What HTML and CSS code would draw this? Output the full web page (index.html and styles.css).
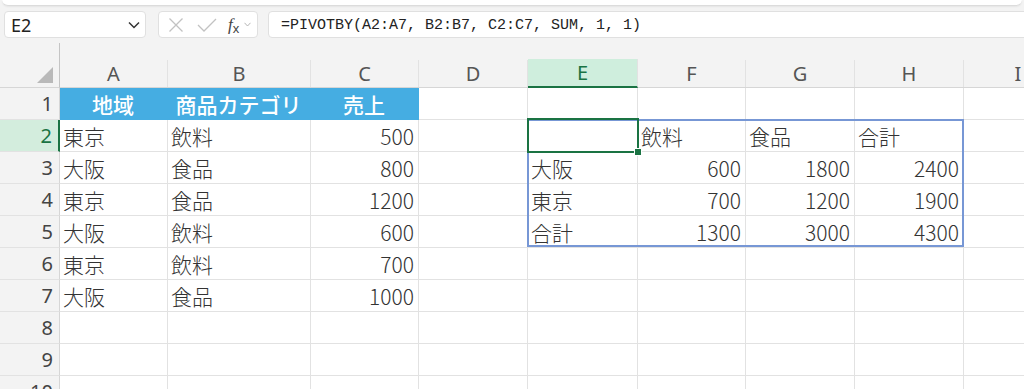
FILE: index.html
```html
<!DOCTYPE html>
<html lang="ja">
<head>
    <meta charset="UTF-8">
    <meta name="viewport" content="width=device-width, initial-scale=1.0">
    <title>PIVOTBY</title>
    <link rel="stylesheet" href="styles.css">
</head>
<body>
    <!-- リボン下端 -->
    <div class="ribbon-edge"></div>

    <!-- 数式バー -->
    <div class="formula-bar">
        <div class="name-box">
            <span>E2</span>
            <svg class="chev" width="12" height="8" viewBox="0 0 12 8"><polyline points="1,1.5 6,6.5 11,1.5" /></svg>
        </div>
        <div class="fx-box">
            <svg class="tool" width="16" height="16" viewBox="0 0 16 16"><path d="M1.5 1.5 L14.5 14.5 M14.5 1.5 L1.5 14.5" /></svg>
            <svg class="tool" width="20" height="14" viewBox="0 0 20 14"><polyline points="1,7 7,13 19,1" /></svg>
            <span class="fx"><i>f</i><b>x</b></span>
            <svg class="chev small" width="7" height="5" viewBox="0 0 7 5"><polyline points="0.5,0.8 3.5,4 6.5,0.8" /></svg>
        </div>
        <div class="formula-input">=PIVOTBY(A2:A7, B2:B7, C2:C7, SUM, 1, 1)</div>
    </div>

    <!-- シート -->
    <div class="sheet">
        <div class="row col-head">
            <div class="corner"><i class="select-all"></i></div>
            <div class="ch a"><span>A</span></div>
            <div class="ch b"><span>B</span></div>
            <div class="ch c"><span>C</span></div>
            <div class="ch d"><span>D</span></div>
            <div class="ch e active"><span>E</span></div>
            <div class="ch f"><span>F</span></div>
            <div class="ch g"><span>G</span></div>
            <div class="ch h"><span>H</span></div>
            <div class="ch i"><span>I</span></div>
        </div>

        <div class="row">
            <div class="rh">1</div>
            <div class="cell a head">地域</div>
            <div class="cell b head">商品カテゴリ</div>
            <div class="cell c head">売上</div>
            <div class="cell d"></div>
            <div class="cell e"></div>
            <div class="cell f"></div>
            <div class="cell g"></div>
            <div class="cell h"></div>
            <div class="cell i"></div>
        </div>

        <div class="row">
            <div class="rh active">2</div>
            <div class="cell a">東京</div>
            <div class="cell b">飲料</div>
            <div class="cell c num">500</div>
            <div class="cell d"></div>
            <div class="cell e current">
                <div class="pivot-frame"></div>
                <div class="selection"></div>
            </div>
            <div class="cell f">飲料</div>
            <div class="cell g">食品</div>
            <div class="cell h">合計</div>
            <div class="cell i"></div>
        </div>

        <div class="row">
            <div class="rh">3</div>
            <div class="cell a">大阪</div>
            <div class="cell b">食品</div>
            <div class="cell c num">800</div>
            <div class="cell d"></div>
            <div class="cell e">大阪</div>
            <div class="cell f num">600</div>
            <div class="cell g num">1800</div>
            <div class="cell h num">2400</div>
            <div class="cell i"></div>
        </div>

        <div class="row">
            <div class="rh">4</div>
            <div class="cell a">東京</div>
            <div class="cell b">食品</div>
            <div class="cell c num">1200</div>
            <div class="cell d"></div>
            <div class="cell e">東京</div>
            <div class="cell f num">700</div>
            <div class="cell g num">1200</div>
            <div class="cell h num">1900</div>
            <div class="cell i"></div>
        </div>

        <div class="row">
            <div class="rh">5</div>
            <div class="cell a">大阪</div>
            <div class="cell b">飲料</div>
            <div class="cell c num">600</div>
            <div class="cell d"></div>
            <div class="cell e">合計</div>
            <div class="cell f num">1300</div>
            <div class="cell g num">3000</div>
            <div class="cell h num">4300</div>
            <div class="cell i"></div>
        </div>

        <div class="row">
            <div class="rh">6</div>
            <div class="cell a">東京</div>
            <div class="cell b">飲料</div>
            <div class="cell c num">700</div>
            <div class="cell d"></div>
            <div class="cell e"></div>
            <div class="cell f"></div>
            <div class="cell g"></div>
            <div class="cell h"></div>
            <div class="cell i"></div>
        </div>

        <div class="row">
            <div class="rh">7</div>
            <div class="cell a">大阪</div>
            <div class="cell b">食品</div>
            <div class="cell c num">1000</div>
            <div class="cell d"></div>
            <div class="cell e"></div>
            <div class="cell f"></div>
            <div class="cell g"></div>
            <div class="cell h"></div>
            <div class="cell i"></div>
        </div>

        <div class="row">
            <div class="rh">8</div>
            <div class="cell a"></div>
            <div class="cell b"></div>
            <div class="cell c"></div>
            <div class="cell d"></div>
            <div class="cell e"></div>
            <div class="cell f"></div>
            <div class="cell g"></div>
            <div class="cell h"></div>
            <div class="cell i"></div>
        </div>

        <div class="row">
            <div class="rh">9</div>
            <div class="cell a"></div>
            <div class="cell b"></div>
            <div class="cell c"></div>
            <div class="cell d"></div>
            <div class="cell e"></div>
            <div class="cell f"></div>
            <div class="cell g"></div>
            <div class="cell h"></div>
            <div class="cell i"></div>
        </div>

        <div class="row">
            <div class="rh">10</div>
            <div class="cell a"></div>
            <div class="cell b"></div>
            <div class="cell c"></div>
            <div class="cell d"></div>
            <div class="cell e"></div>
            <div class="cell f"></div>
            <div class="cell g"></div>
            <div class="cell h"></div>
            <div class="cell i"></div>
        </div>
    </div>
</body>
</html>
```

FILE: styles.css
```css
html, body { height: 100%; }
body {
    margin: 0;
    overflow: hidden;
    background: #f3f3f3;
    font-family: "Noto Sans", "Noto Sans CJK JP", sans-serif;
}

/* リボン下端 */
.ribbon-edge {
    height: 5px;
    margin: 0 2px;
    background: #fff;
    border-bottom: 1px solid #dcdcdc;
    border-radius: 0 0 6px 6px;
    box-shadow: 0 1px 2px rgba(0, 0, 0, 0.06);
}

/* 数式バー */
.formula-bar {
    display: flex;
    height: 37px;
    box-sizing: border-box;
    padding: 5px 0 0 4px;
    gap: 12px;
}
.name-box, .fx-box, .formula-input {
    box-sizing: border-box;
    height: 27px;
    background: #fff;
    border: 1px solid #e0e0e0;
    border-radius: 4px;
    display: flex;
    align-items: center;
}
.name-box {
    width: 142px;
    padding: 0 5px 0 6px;
    justify-content: space-between;
    font-size: 18px;
    color: #222;
}
.chev { fill: none; stroke: #333; stroke-width: 1.5; }
.chev.small { stroke: #b5b5b5; stroke-width: 1; }
.fx-box {
    width: 100px;
    padding: 0 5px 0 9px;
    margin-right: -2px;
}
.fx-box .tool { fill: none; stroke: #c2c2c2; stroke-width: 1.3; }
.fx-box .tool + .tool { margin-left: 13px; }
.fx {
    margin: 0 5px 0 11px;
    color: #444;
    font-family: "Liberation Serif", serif;
    font-size: 17px;
    line-height: 1;
}
.fx i { font-style: italic; }
.fx b { font-weight: normal; font-size: 13px; font-family: "Liberation Sans", sans-serif; position: relative; top: 3px; }
.formula-input {
    flex: 1;
    margin-right: -12px;
    padding: 1px 0 0 12px;
    font-family: "Liberation Mono", monospace;
    font-size: 15px;
    color: #222;
}

/* シート */
.sheet { width: 1100px; }
.row { display: flex; }
.a { width: 108px; }
.b { width: 143px; }
.c { width: 108px; }
.d { width: 109px; }
.e { width: 110px; }
.f { width: 108px; }
.g { width: 109px; }
.h { width: 109px; }
.i { width: 109px; }

/* 列見出し */
.col-head { height: 45px; }
.corner {
    width: 60px;
    flex: none;
    box-sizing: border-box;
    border-right: 1px solid #c4c4c4;
    border-bottom: 1px solid #d6d6d6;
    display: flex;
    justify-content: flex-end;
    align-items: flex-end;
    padding: 0 6px 4px 0;
}
.select-all {
    display: block;
    width: 0;
    height: 0;
    border-style: solid;
    border-width: 0 0 16px 16px;
    border-color: transparent transparent #b9b9b9 transparent;
}
.ch {
    flex: none;
    box-sizing: border-box;
    border-bottom: 1px solid #d6d6d6;
    display: flex;
    align-items: flex-end;
}
.ch span {
    flex: 1;
    height: 27px;
    line-height: 27px;
    text-align: center;
    border-right: 1px solid #e2e2e2;
    font-size: 20px;
    color: #555;
}
.ch.active span {
    background: #cfeedd;
    color: #1a7343;
    border-bottom: 2px solid #1a7343;
    margin-bottom: -1px;
}

/* 行見出し */
.rh {
    width: 60px;
    height: 32px;
    flex: none;
    box-sizing: border-box;
    border-right: 1px solid #d6d6d6;
    border-bottom: 1px solid #e2e2e2;
    padding-right: 6px;
    text-align: right;
    line-height: 31px;
    font-size: 20px;
    color: #444;
}
.rh.active {
    background: #d3eddd;
    color: #1a7343;
    border-right: 2px solid #1a7343;
}

/* セル */
.cell {
    height: 32px;
    flex: none;
    box-sizing: border-box;
    background: #fff;
    border-right: 1px solid #e2e2e2;
    border-bottom: 1px solid #e2e2e2;
    padding: 1px 4px 0 3px;
    line-height: 31px;
    white-space: nowrap;
    font-family: "Noto Sans CJK JP", sans-serif;
    font-size: 21px;
    font-weight: 300;
    color: #333;
}
.cell.num { text-align: right; }
.cell.head {
    background: #45ade2;
    border-color: #45ade2;
    color: #fff;
    text-align: center;
    font-weight: 500;
}
.cell.current { position: relative; }
.pivot-frame {
    position: absolute;
    top: -1px;
    left: -1px;
    width: 437px;
    height: 128px;
    box-sizing: border-box;
    border: 2px solid #7797d5;
}
.selection {
    position: absolute;
    top: -2px;
    left: -1px;
    right: -2px;
    bottom: -2px;
    border: 2px solid #1a7343;
}
.selection::after {
    content: "";
    position: absolute;
    right: -5px;
    bottom: -5px;
    width: 6px;
    height: 6px;
    background: #1a7343;
    border: 1px solid #fff;
}
```
